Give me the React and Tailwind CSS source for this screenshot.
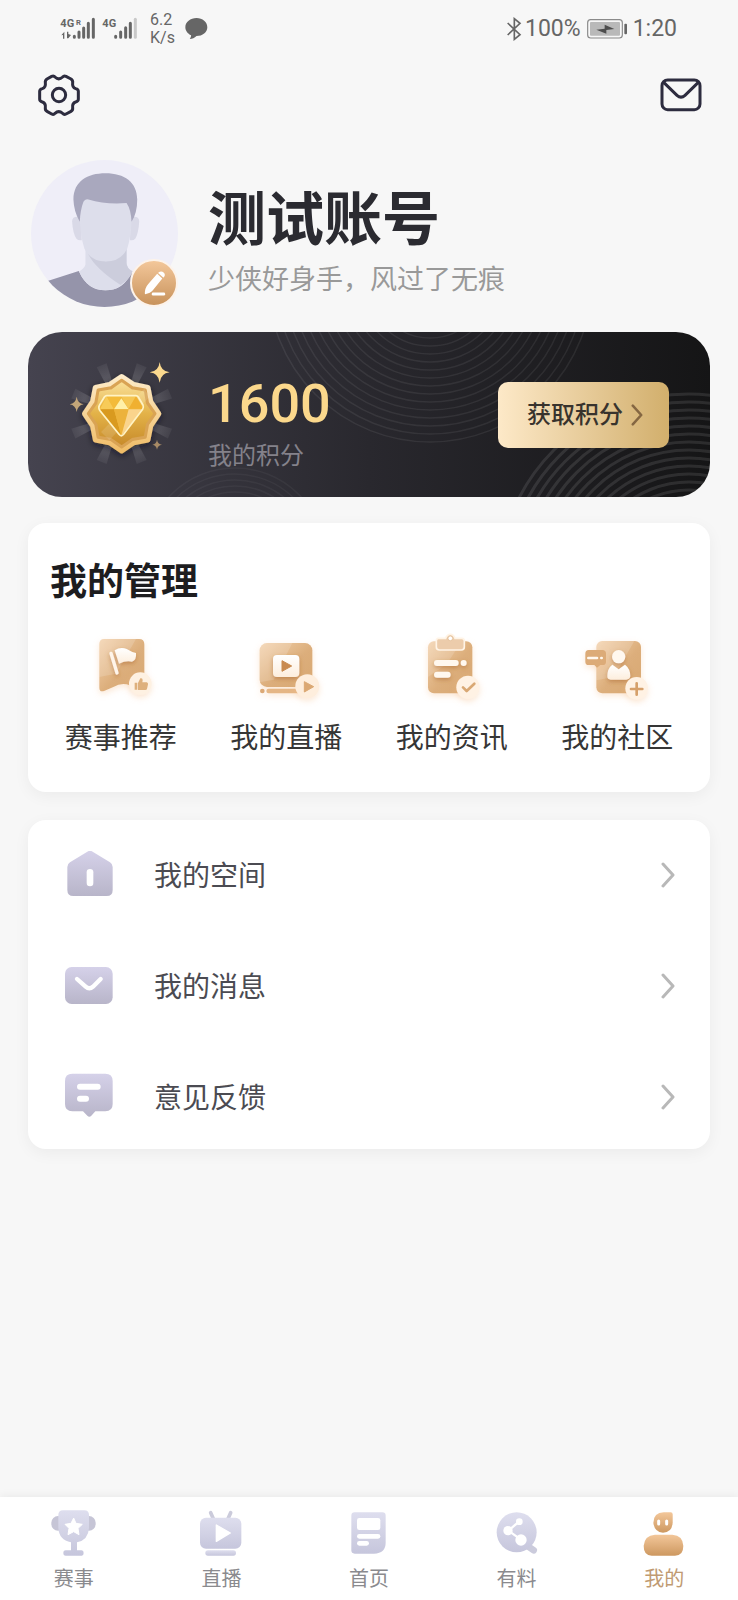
import React, { useState } from 'react';

// points of an eight-pointed star, used by the points medal
const starPoints = (cx, cy, outer, inner) =>
    Array.from({ length: 16 }, (_, i) => {
        const r = i % 2 === 0 ? outer : inner;
        const a = (Math.PI / 8) * i - Math.PI / 2;
        return `${(cx + r * Math.cos(a)).toFixed(1)},${(cy + r * Math.sin(a)).toFixed(1)}`;
    }).join(' ');

const Gradients = () => (
    <svg className="absolute h-0 w-0" aria-hidden="true">
        <defs>
            <linearGradient id="gold" x1="0" y1="0" x2="0" y2="1">
                <stop offset="0" stopColor="#f3c79a" />
                <stop offset="1" stopColor="#cd9860" />
            </linearGradient>
            <linearGradient id="tile" x1="0" y1="0" x2="1" y2="1">
                <stop offset="0" stopColor="#f3d2ae" />
                <stop offset="0.55" stopColor="#dcae7b" />
                <stop offset="1" stopColor="#d8a873" />
            </linearGradient>
            <linearGradient id="cream" x1="0" y1="0" x2="0" y2="1">
                <stop offset="0" stopColor="#ffffff" />
                <stop offset="1" stopColor="#fdeedd" />
            </linearGradient>
            <linearGradient id="lilac" x1="0" y1="0" x2="0" y2="1">
                <stop offset="0" stopColor="#d5d1e9" />
                <stop offset="1" stopColor="#b8b5c9" />
            </linearGradient>
            <linearGradient id="tab" x1="0" y1="0" x2="0" y2="1">
                <stop offset="0" stopColor="#dedeee" />
                <stop offset="1" stopColor="#c6c6dc" />
            </linearGradient>
            <linearGradient id="medalRim" x1="0" y1="0" x2="0" y2="1">
                <stop offset="0" stopColor="#fdebc8" />
                <stop offset="1" stopColor="#f0bd68" />
            </linearGradient>
            <linearGradient id="medalFace" x1="0" y1="0" x2="0" y2="1">
                <stop offset="0" stopColor="#f8dd93" />
                <stop offset="0.5" stopColor="#e3b248" />
                <stop offset="1" stopColor="#c98d2c" />
            </linearGradient>
            <filter id="glow" x="-40%" y="-40%" width="180%" height="190%">
                <feDropShadow dx="0" dy="8" stdDeviation="10" floodColor="#f5bd88" floodOpacity="0.35" />
            </filter>
            <filter id="shade" x="-40%" y="-40%" width="180%" height="200%">
                <feDropShadow dx="0" dy="6" stdDeviation="7" floodColor="#a8642a" floodOpacity="0.5" />
            </filter>
        </defs>
    </svg>
);

const Signal = () => (
    <svg viewBox="120 45 234 75" className="h-[25px] w-[78px]" fill="#666" aria-hidden="true">
        <g fontFamily="'Liberation Sans Narrow', 'Roboto', sans-serif" fontWeight="700">
            <text x="121" y="78" fontSize="33">4G</text>
            <text x="168" y="72" fontSize="23">R</text>
            <text x="247" y="78" fontSize="33">4G</text>
        </g>
        <path d="M124 103l9-11v21h-4v-11zM141 92h4v7l8 3-8 10h-4z" />
        <g stroke="#666" strokeWidth="9" strokeLinecap="round">
            <path d="M163 106v3M177 93v16M191 81v28M205 67v42M220 55v54" />
            <path d="M287 106v3M302 93v16M317 80v29M331 67v42" />
            <path d="M346 55v54" stroke="#c9c9c9" />
        </g>
    </svg>
);

const StatusBar = () => (
    <div className="flex h-14 items-center justify-between pl-[60px] pr-[61px] text-[#666]">
        <div className="flex items-center">
            <Signal />
            <div className="ml-3 w-[24px] pt-[2px] text-[16px] leading-[18px]">
                <p>6.2</p>
                <p>K/s</p>
            </div>
            <svg viewBox="496 50 68 68" className="ml-[11px] h-[23px] w-[23px]" fill="#666" aria-hidden="true">
                <path d="M530 53c18 0 32 12 32 27s-14 26-32 26c-6 5-12 9-20 9 3-4 4-7 4-11-10-5-17-14-17-24 0-15 15-27 33-27z" />
            </svg>
        </div>
        <div className="flex items-center pt-[2px] text-[23px] leading-7">
            <svg viewBox="110 46 48 72" className="h-[24px] w-[16px]" fill="none" stroke="#666" strokeWidth="5" aria-hidden="true">
                <path d="M115 64l37 35-17 14V51l17 14-37 35" />
            </svg>
            <span className="ml-[3px]">100%</span>
            <svg viewBox="350 50 123 66" className="ml-[6px] h-[22px] w-[41px]" aria-hidden="true">
                <rect x="352" y="55" width="104" height="55" rx="9" fill="none" stroke="#8a8a8a" strokeWidth="3.5" />
                <rect x="359" y="62" width="90" height="41" rx="3" fill="#b9b9b9" />
                <rect x="462" y="67" width="8" height="32" rx="3" fill="#666" />
                <path d="M378 85l25-3v-12l29 13-24 3v11z" fill="#4d4d4d" />
            </svg>
            <span className="ml-[5px]">1:20</span>
        </div>
    </div>
);

const Avatar = () => (
    <svg viewBox="32 32 440 440" className="h-[147px] w-[147px] rounded-full bg-[#efeef8]" role="img" aria-label="头像">
        <path d="M70 398L175 364Q200 422 255 422Q308 422 330 370L440 405V480H70Z" fill="#9594aa" />
        <path d="M195 280V345Q193 356 176 366Q200 422 255 422Q310 422 336 364Q318 355 318 340V280Z" fill="#dddeeb" />
        <path d="M195 290Q205 345 300 406Q325 392 336 366Q318 355 318 340V285Q300 335 255 335Q215 330 195 290Z" fill="#cccddc" />
        <path d="M180 203Q156 198 155 215Q157 250 168 268Q174 274 184 272ZM331 203Q355 198 356 215Q354 250 344 268Q338 274 328 272Z" fill="#d9d9e7" />
        <path d="M180 170Q190 145 205 145H318Q326 150 333 205Q332 260 320 298Q300 336 256 336Q212 336 192 298Q180 260 179 215Z" fill="#dddeeb" />
        <path d="M178 217Q160 185 159 150C160 96 200 72 255 72C312 72 349 98 350 150Q350 190 333 217Q331 180 318 161Q255 166 204 150Q194 147 189 157Q180 180 178 217Z" fill="#a9a8be" />
    </svg>
);

const Rings = () => {
    const set = (count, start, step) => Array.from({ length: count }, (_, i) => start - i * step);
    return (
        <svg viewBox="0 0 682 165" preserveAspectRatio="xMidYMid slice" className="absolute inset-0 h-full w-full" fill="none" stroke="#fff" aria-hidden="true">
            <g strokeOpacity="0.07" strokeWidth="1.5">
                {set(15, 162, 8).map((r) => <circle key={r} cx="402" cy="-52" r={r} />)}
            </g>
            <g strokeOpacity="0.1" strokeWidth="3">
                {set(14, 191, 8).map((r) => <circle key={r} cx="661" cy="253" r={r} />)}
            </g>
            <g strokeOpacity="0.045" strokeWidth="1.5">
                {set(5, 90, 6).map((r) => <circle key={r} cx="207" cy="226" r={r} />)}
            </g>
        </svg>
    );
};

const Medal = () => (
    <svg viewBox="140 104 330 330" className="h-[110px] w-[110px] shrink-0" aria-hidden="true">
        <defs>
            <radialGradient id="ray" gradientUnits="userSpaceOnUse" cx="307" cy="265" r="165">
                <stop offset="0.6" stopColor="#fff" stopOpacity="0.17" />
                <stop offset="1" stopColor="#fff" stopOpacity="0.04" />
            </radialGradient>
            <filter id="medalShadow" x="-30%" y="-30%" width="160%" height="160%">
                <feDropShadow dx="0" dy="6" stdDeviation="9" floodColor="#15141b" floodOpacity="0.6" />
            </filter>
        </defs>
        {[22.5, 67.5, 112.5, 157.5, 202.5, 247.5, 292.5, 337.5].map((deg) => (
            <path key={deg} d="M300 200L291 108H323L314 200Z" fill="url(#ray)" transform={`rotate(${deg} 307 265)`} />
        ))}
        <polygon points={starPoints(307, 265, 111, 94)} fill="url(#medalRim)" stroke="url(#medalRim)" strokeWidth="16" strokeLinejoin="round" filter="url(#medalShadow)" />
        <polygon points={starPoints(307, 265, 100, 84)} fill="#d9a354" stroke="#d9a354" strokeWidth="9" strokeLinejoin="round" />
        <polygon points={starPoints(307, 265, 91, 76)} fill="url(#medalFace)" stroke="url(#medalFace)" strokeWidth="6" strokeLinejoin="round" />
        <path d="M245 320L375 190L390 215L270 345Z" fill="#fff" fillOpacity="0.12" />
        <path d="M262 213H350L371 246L306 331L240 248Z" fill="#f0b93c" />
        <path d="M262 213L284 252H242Z" fill="#f7cb58" />
        <path d="M262 213H306L284 252Z" fill="#f3bb3a" />
        <path d="M306 219L284 252H328Z" fill="#fff0a8" />
        <path d="M306 213H350L328 252Z" fill="#f5c653" />
        <path d="M350 213L371 250H328Z" fill="#f0b030" />
        <path d="M242 252H284L306 331Z" fill="#d99a1f" />
        <path d="M284 252H328L306 331Z" fill="#ecb23b" />
        <path d="M328 252H371L306 331Z" fill="#fad48c" />
        <path d="M262 211H350Q354 211 357 215L371 239Q374 246 370 252L313 327Q306 336 299 327L242 256Q236 248 240 240L255 215Q258 211 262 211Z" fill="none" stroke="#fff3c4" strokeWidth="5" strokeLinejoin="round" />
        <path d="M421 110Q424 138 451 141Q424 144 421 172Q418 144 391 141Q418 138 421 110Z" fill="#fbd98e" />
        <path d="M172 214Q175 234 193 237Q175 240 172 260Q169 240 151 237Q169 234 172 214Z" fill="#c3a679" />
        <path d="M413 343Q415 356 428 358Q415 360 413 373Q411 360 399 358Q411 356 413 343Z" fill="#a88b66" />
    </svg>
);

const FlagIcon = () => (
    <svg viewBox="153 0 300 240" className="h-20 w-[100px]" aria-hidden="true">
        <g filter="url(#glow)">
            <path d="M253 36H357Q373 36 373 52V192Q340 178 320 172Q300 168 280 180L252 192Q238 196 238 182V52Q238 36 253 36Z" fill="url(#tile)" />
        </g>
        <path d="M253 36H348L288 140L238 150V52Q238 36 253 36Z" fill="#fff" fillOpacity="0.16" />
        <g filter="url(#shade)">
            <path d="M273 79L291 138" stroke="#fff5ea" strokeWidth="10" strokeLinecap="round" />
            <path d="M284 70Q302 58 320 66Q336 76 348 78Q350 100 336 104Q318 100 297 110Z" fill="url(#cream)" />
        </g>
        <g filter="url(#glow)">
            <circle cx="361" cy="170" r="34" fill="#fef1e2" />
        </g>
        <path d="M344 167H352V188H344ZM354 168L361 154Q368 152 368 160L367 166H380Q385 167 384 172L381 186Q380 189 376 189H354Z" fill="#deb07c" />
    </svg>
);

const LiveIcon = () => (
    <svg viewBox="647 0 300 240" className="h-20 w-[100px]" aria-hidden="true">
        <g filter="url(#glow)">
            <rect x="718" y="48" width="158" height="132" rx="22" fill="url(#tile)" />
            <circle cx="726" cy="192" r="7" fill="#dca976" />
            <rect x="738" y="185" width="112" height="14" rx="7" fill="#e5b685" />
        </g>
        <path d="M740 48H816L760 158L718 166V70Q718 48 740 48Z" fill="#fff" fillOpacity="0.16" />
        <g filter="url(#shade)">
            <rect x="758" y="84" width="79" height="66" rx="12" fill="url(#cream)" />
        </g>
        <path d="M785 101L814 117L785 133Z" fill="#c98a4f" stroke="#c98a4f" strokeWidth="3" strokeLinejoin="round" />
        <g filter="url(#glow)">
            <circle cx="861" cy="178" r="36" fill="#feeedd" />
        </g>
        <path d="M852 164L880 179L852 195Z" fill="#dba873" stroke="#dba873" strokeWidth="3" strokeLinejoin="round" />
    </svg>
);

const NewsIcon = () => (
    <svg viewBox="95 0 300 240" className="h-20 w-[100px]" aria-hidden="true">
        <g filter="url(#glow)">
            <rect x="173" y="43" width="133" height="156" rx="18" fill="url(#tile)" />
        </g>
        <path d="M191 43H274L230 110L173 150V61Q173 43 191 43Z" fill="#fff" fillOpacity="0.15" />
        <path d="M204 34H226Q230 22 240 22Q250 22 254 34H274Q282 34 282 42V60Q282 69 273 69H207Q198 69 198 60V42Q198 34 204 34Z" fill="#ecccab" stroke="#fff4e6" strokeWidth="5" />
        <circle cx="240" cy="34" r="7" fill="#fff" stroke="#dfb78c" strokeWidth="2" />
        <g filter="url(#shade)">
            <rect x="191" y="99" width="74" height="18" rx="9" fill="#fff8ef" />
            <circle cx="280" cy="108" r="9" fill="#fff8ef" />
            <rect x="191" y="134" width="50" height="18" rx="9" fill="#fff8ef" />
        </g>
        <g filter="url(#glow)">
            <circle cx="293" cy="181" r="35" fill="#fff2e4" />
        </g>
        <path d="M278 181L289 192L312 170" fill="none" stroke="#d9a874" strokeWidth="8" strokeLinecap="round" strokeLinejoin="round" />
    </svg>
);

const CommunityIcon = () => (
    <svg viewBox="590 0 300 240" className="h-20 w-[100px]" aria-hidden="true">
        <g filter="url(#glow)">
            <rect x="678" y="42" width="134" height="157" rx="18" fill="url(#tile)" />
        </g>
        <path d="M696 42H792L730 150L678 160V60Q678 42 696 42Z" fill="#fff" fillOpacity="0.16" />
        <g filter="url(#glow)">
            <path d="M655 69H696Q707 69 707 80V104Q707 114 697 114H690L680 122L672 114H655Q645 114 645 104V80Q645 69 655 69Z" fill="#dcab78" />
        </g>
        <path d="M654 93H680M693 93H694" stroke="#fff8ef" strokeWidth="8" strokeLinecap="round" />
        <g filter="url(#shade)">
            <circle cx="745" cy="89" r="20" fill="#fff8ef" />
            <path d="M726 113L745 127L764 113Q780 125 780 148Q778 158 768 158H721Q711 158 711 148Q711 124 726 113Z" fill="url(#cream)" />
        </g>
        <g filter="url(#glow)">
            <circle cx="799" cy="184" r="34" fill="#fff2e4" />
        </g>
        <path d="M799 169V203M782 186H816" stroke="#d6a06a" strokeWidth="8" strokeLinecap="round" />
    </svg>
);

const HouseIcon = () => (
    <svg viewBox="0 0 144 144" className="h-12 w-12" aria-hidden="true">
        <path d="M67 2Q75 -3 83 2L135 34Q143 39 143 48V117Q143 135 125 135H25Q7 135 7 117V48Q7 39 15 34Z" fill="url(#lilac)" />
        <rect x="65" y="54" width="20" height="52" rx="10" fill="#fff" />
    </svg>
);

const MailIcon = () => (
    <svg viewBox="0 0 144 144" className="h-12 w-12" aria-hidden="true">
        <rect x="0" y="15" width="143" height="111" rx="20" fill="url(#lilac)" />
        <path d="M36 51L62 74Q73 84 84 74L107 51" fill="none" stroke="#fff" strokeWidth="13" strokeLinecap="round" />
    </svg>
);

const FeedbackIcon = () => (
    <svg viewBox="0 0 144 144" className="h-12 w-12" aria-hidden="true">
        <path d="M22 2H121Q143 2 143 24V93Q143 115 121 115H91L79 128Q73 134 67 128L54 115H22Q0 115 0 93V24Q0 2 22 2Z" fill="url(#lilac)" />
        <rect x="36" y="32" width="71" height="18" rx="9" fill="#fff" />
        <rect x="36" y="68" width="36" height="18" rx="9" fill="#fff" />
    </svg>
);

const TrophyIcon = () => (
    <svg viewBox="0 0 150 150" className="h-[50px] w-[50px]" aria-hidden="true">
        <rect x="7" y="24" width="40" height="44" rx="20" fill="#c6c5d6" />
        <rect x="100" y="24" width="40" height="44" rx="20" fill="#c6c5d6" />
        <path d="M42 7H106Q120 7 120 21V60Q118 96 84 103V127H98Q104 127 104 135T98 143H50Q43 143 43 135T50 127H66V103Q30 96 28 60V21Q28 7 42 7Z" fill="url(#tab)" />
        <path d="M74 30L81 46L100 49L87 61L90 80L74 71L57 80L60 61L48 49L66 46Z" fill="#fff" stroke="#fff" strokeWidth="3" strokeLinejoin="round" />
    </svg>
);

const TvIcon = () => (
    <svg viewBox="0 0 150 150" className="h-[50px] w-[50px]" aria-hidden="true">
        <path d="M44 14L52 32M104 14L96 32" stroke="#cbcbdb" strokeWidth="11" strokeLinecap="round" />
        <rect x="12" y="29" width="124" height="93" rx="18" fill="url(#tab)" />
        <rect x="28" y="127" width="92" height="16" rx="8" fill="url(#tab)" />
        <path d="M61 51L103 75L61 100Z" fill="#fff" stroke="#fff" strokeWidth="4" strokeLinejoin="round" />
    </svg>
);

const HomeIcon = () => (
    <svg viewBox="0 0 150 150" className="h-[50px] w-[50px]" aria-hidden="true">
        <path d="M32 13H115Q125 13 125 23V103Q125 137 90 137H32Q22 137 22 127V23Q22 13 32 13Z" fill="url(#tab)" />
        <rect x="39" y="30" width="70" height="36" rx="7" fill="#fff" />
        <rect x="39" y="78" width="70" height="14" rx="7" fill="#fff" />
        <rect x="39" y="99" width="36" height="14" rx="7" fill="#fff" />
    </svg>
);

const ShareIcon = () => (
    <svg viewBox="0 0 150 150" className="h-[50px] w-[50px]" aria-hidden="true">
        <path d="M112 118L125 127" stroke="#cbcbdc" strokeWidth="20" strokeLinecap="round" />
        <circle cx="74" cy="73" r="60" fill="url(#tab)" />
        <path d="M81 41L49 68L87 95" fill="none" stroke="#fff" strokeWidth="7" />
        <circle cx="82" cy="41" r="10" fill="#fff" />
        <circle cx="48" cy="68" r="14" fill="#fff" />
        <circle cx="87" cy="96" r="17" fill="#fff" />
    </svg>
);

const MeIcon = () => (
    <svg viewBox="0 0 150 150" className="h-[50px] w-[50px]" aria-hidden="true">
        <path d="M74 13H95Q101 13 101 19V44Q99 74 72 74Q46 72 43 44Q44 14 74 13Z" fill="url(#gold)" />
        <path d="M59 39V48M83 39V48" stroke="#fff" strokeWidth="9" strokeLinecap="round" />
        <path d="M48 80H100Q132 82 133 114Q133 143 108 143H38Q14 143 14 114Q16 82 48 80Z" fill="url(#gold)" />
    </svg>
);

const Chevron = ({ className, color }) => (
    <svg viewBox="0 0 14 26" className={className} fill="none" stroke={color} strokeWidth="3" strokeLinecap="round" strokeLinejoin="round" aria-hidden="true">
        <path d="M2 2L12 13L2 24" />
    </svg>
);

const manageItems = [
    { label: '赛事推荐', icon: FlagIcon },
    { label: '我的直播', icon: LiveIcon },
    { label: '我的资讯', icon: NewsIcon },
    { label: '我的社区', icon: CommunityIcon },
];

const menuItems = [
    { label: '我的空间', icon: HouseIcon },
    { label: '我的消息', icon: MailIcon },
    { label: '意见反馈', icon: FeedbackIcon },
];

const tabs = [
    { label: '赛事', icon: TrophyIcon },
    { label: '直播', icon: TvIcon },
    { label: '首页', icon: HomeIcon },
    { label: '有料', icon: ShareIcon },
    { label: '我的', icon: MeIcon },
];

const App = () => {
    const [activeTab, setActiveTab] = useState('我的');

    return (
        <div className="flex min-h-screen flex-col bg-[#f7f7f7] font-['Roboto','Noto_Sans_CJK_SC',sans-serif]">
            <Gradients />
            <StatusBar />

            <header className="flex h-[77px] items-center justify-between pl-[37px] pr-[35px]">
                <button type="button" aria-label="设置">
                    <svg viewBox="52 217 132 132" className="h-11 w-11" fill="none" stroke="#2d2c3f" strokeWidth="9" strokeLinejoin="round">
                        <path d="M96 227Q102 224 106 229Q117 240 129 229Q133 224 139 227L154 235Q160 239 159 246Q157 260 168 264Q176 266 176 272V296Q176 302 168 304Q157 308 159 321Q160 329 154 332L139 340Q133 343 129 338Q117 328 106 338Q102 343 96 340L82 332Q76 329 77 321Q79 308 68 304Q60 302 60 296V272Q60 266 68 264Q79 260 77 246Q76 239 82 235Z" />
                        <circle cx="118" cy="283" r="20" />
                    </svg>
                </button>
                <button type="button" aria-label="消息">
                    <svg viewBox="566 218 132 132" className="h-11 w-11" fill="none" stroke="#2d2c3f" strokeWidth="9" strokeLinejoin="round">
                        <rect x="575" y="239" width="114" height="89" rx="17" />
                        <path d="M580 246L620 285Q632 296 644 285L684 246" />
                    </svg>
                </button>
            </header>

            <main className="flex flex-1 flex-col px-7 pb-10 pt-[27px]">
                <section className="flex items-center gap-[30px] pl-[3px]">
                    <div className="relative shrink-0">
                        <Avatar />
                        <button type="button" aria-label="编辑资料" className="absolute bottom-0 right-0 h-12 w-12 rounded-full border-2 border-[#fdf3ea] bg-gradient-to-b from-[#f3c79a] to-[#c8935c]">
                            <svg viewBox="330 329 138 138" className="h-full w-full" fill="#fff">
                                <path d="M409 369L425 384L396 420Q388 430 371 433Q369 431 372 417Q375 407 381 401ZM413 365Q422 358 430 366Q436 373 430 380L428 381L412 367Z" />
                                <rect x="392" y="428" width="42" height="9" rx="4" />
                            </svg>
                        </button>
                    </div>
                    <div className="pt-4">
                        <h1 className="text-[58px] font-bold leading-[70px] text-[#2b2b31]">测试账号</h1>
                        <p className="mt-[7px] text-[27px] leading-9 text-[#999]">少侠好身手，风过了无痕</p>
                    </div>
                </section>

                <section className="relative mt-[25px] flex h-[165px] items-center overflow-hidden rounded-[34px] bg-gradient-to-r from-[#45434f] via-[#29282e] to-[#151516] pl-[38px] pr-[41px]">
                    <Rings />
                    <Medal />
                    <div className="relative ml-8 flex-1 pt-[19px]">
                        <p className="text-[54px] font-medium leading-[54px] text-[#fbd88c]">1600</p>
                        <p className="mt-[10px] text-[24px] leading-[30px] text-[#84828b]">我的积分</p>
                    </div>
                    <button type="button" className="relative flex h-[66px] w-[171px] items-center justify-center gap-2 rounded-[10px] bg-gradient-to-r from-[#fde9c8] to-[#d2af6c] pl-[3px] text-[24px] font-medium text-[#38332d]">
                        获取积分
                        <Chevron className="h-[22px] w-3" color="#856742" />
                    </button>
                </section>

                <section className="mt-[26px] rounded-[18px] bg-white px-[10px] pb-[35px] pt-9 shadow-[0_4px_16px_rgba(0,0,0,0.05)]">
                    <h2 className="pl-3 text-[37px] font-bold leading-[48px] text-[#1d1d1f]">我的管理</h2>
                    <div className="mt-5 grid grid-cols-4">
                        {manageItems.map(({ label, icon: Icon }) => (
                            <a key={label} href="#" className="flex flex-col items-center gap-[14px]">
                                <Icon />
                                <span className="text-[28px] leading-9 text-[#363636]">{label}</span>
                            </a>
                        ))}
                    </div>
                </section>

                <section className="mt-7 flex flex-col gap-[27px] rounded-[18px] bg-white pb-[10px] pl-[37px] pr-[35px] pt-[13px] shadow-[0_4px_16px_rgba(0,0,0,0.05)]">
                    {menuItems.map(({ label, icon: Icon }) => (
                        <a key={label} href="#" className="flex h-[84px] items-center">
                            <Icon />
                            <span className="ml-[41px] flex-1 pt-[3px] text-[28px] leading-9 text-[#4b4b52]">{label}</span>
                            <Chevron className="h-[26px] w-[14px]" color="#b8b8b8" />
                        </a>
                    ))}
                </section>
            </main>

            <nav className="grid grid-cols-5 bg-white pb-[7px] pt-[11px] shadow-[0_-2px_8px_rgba(0,0,0,0.05)]">
                {tabs.map(({ label, icon: Icon }) => (
                    <button
                        key={label}
                        type="button"
                        onClick={() => setActiveTab(label)}
                        className={`flex flex-col items-center gap-[7px] text-[20px] leading-7 ${label === activeTab ? 'text-[#c09a72]' : 'text-[#8a8a8e]'}`}
                    >
                        <Icon />
                        {label}
                    </button>
                ))}
            </nav>
        </div>
    );
};

export default App;
